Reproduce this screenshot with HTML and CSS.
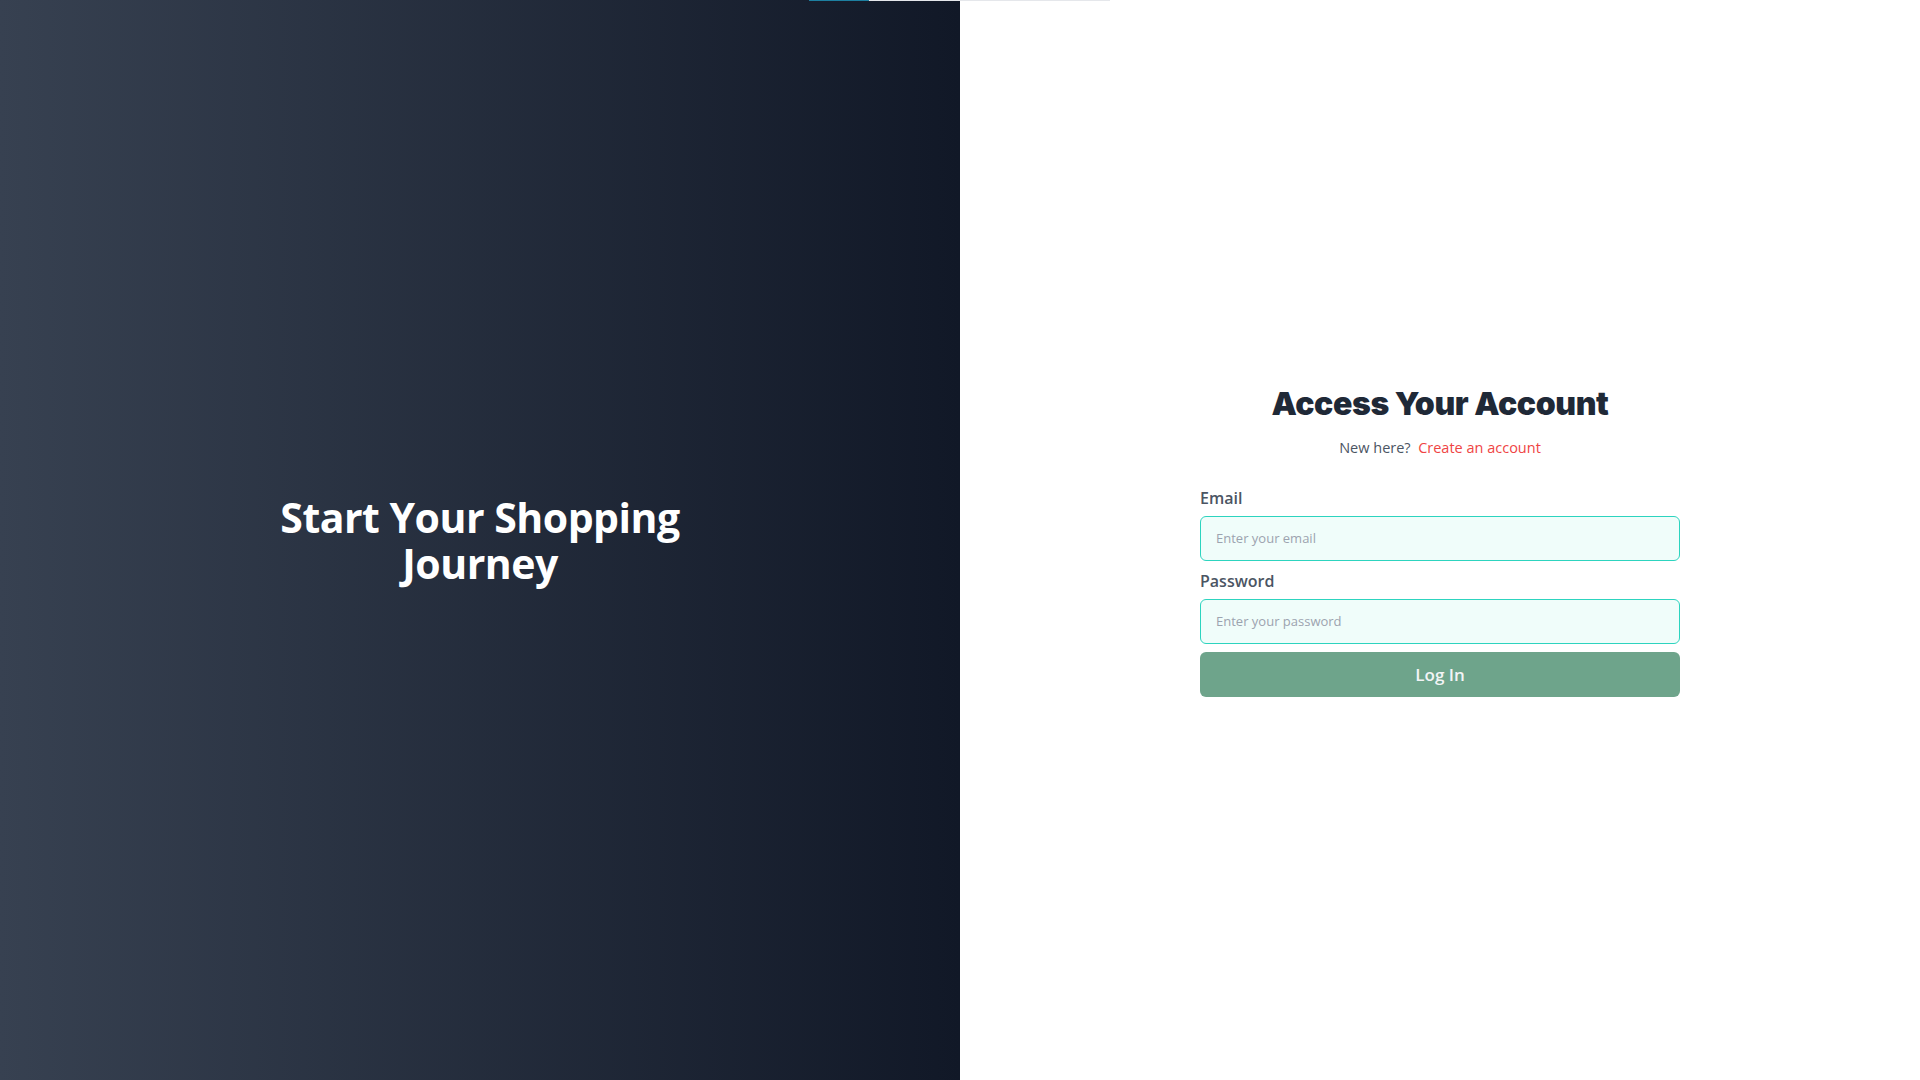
FILE: index.html
```html
<!DOCTYPE html>
<html lang="en">
<head>
<meta charset="utf-8">
<title>Log In</title>
<link rel="stylesheet" href="styles.css">
</head>
<body>
<div class="progress"><div class="progress-fill"></div></div>
<main class="page">
  <section class="hero">
    <h1 class="hero-title">Start Your Shopping<br>Journey</h1>
  </section>
  <section class="auth">
    <form class="auth-form">
      <h2 class="auth-title">Access Your Account</h2>
      <p class="auth-sub">New here?&nbsp; <a href="#" class="auth-link">Create an account</a></p>
      <label class="field-label" for="email">Email</label>
      <input class="field-input" id="email" type="email" placeholder="Enter your email">
      <label class="field-label field-label-gap" for="password">Password</label>
      <input class="field-input" id="password" type="password" placeholder="Enter your password">
      <button class="submit" type="button">Log In</button>
    </form>
  </section>
</main>
</body>
</html>
```

FILE: styles.css
```css
* { box-sizing: border-box; }
html, body { margin: 0; padding: 0; }
body {
  font-family: "Open Sans", "Noto Sans", sans-serif;
  background: #ffffff;
}
.progress {
  position: fixed;
  top: 0;
  left: 809px;
  width: 301px;
  height: 1px;
  background: #e5e7eb;
  z-index: 10;
}
.progress-fill {
  width: 60px;
  height: 100%;
  background: #1d7fa0;
}
.page {
  display: flex;
  height: 1080px;
}
.hero {
  width: 960px;
  flex: none;
  display: flex;
  align-items: center;
  justify-content: center;
  background: linear-gradient(to right, #374151, #111827);
}
.hero-title {
  margin: 0;
  color: #ffffff;
  font-size: 41px;
  line-height: 46px;
  font-weight: 700;
  text-align: center;
  letter-spacing: -0.5px;
}
.auth {
  flex: 1;
  display: flex;
  align-items: center;
  justify-content: center;
}
.auth-form {
  width: 480px;
  display: flex;
  flex-direction: column;
}
.auth-title {
  margin: 0;
  text-align: center;
  font-family: Inter, sans-serif;
  font-weight: 900;
  font-size: 32px;
  line-height: 40px;
  color: #1f2937;
  letter-spacing: -0.4px;
}
.auth-sub {
  margin: 14px 0 28px;
  text-align: center;
  font-size: 14.5px;
  line-height: 20px;
  color: #4b5563;
}
.auth-link {
  color: #ef4444;
  text-decoration: none;
}
.field-label {
  font-size: 16px;
  line-height: 24px;
  font-weight: 600;
  color: #4b5563;
  margin-bottom: 6px;
}
.field-label-gap { margin-top: 8px; }
.field-input {
  height: 45px;
  padding: 0 15px;
  border: 1px solid #2dd4bf;
  border-radius: 6px;
  background: #f0fdfa;
  font-family: inherit;
  font-size: 13px;
  color: #111827;
  outline: none;
}
.field-input::placeholder { color: #9ca3af; }
.submit {
  margin-top: 8px;
  height: 45px;
  border: none;
  border-radius: 6px;
  background: #6ea48b;
  color: #f3f4f6;
  font-family: inherit;
  font-size: 17px;
  font-weight: 600;
  cursor: pointer;
}
```
